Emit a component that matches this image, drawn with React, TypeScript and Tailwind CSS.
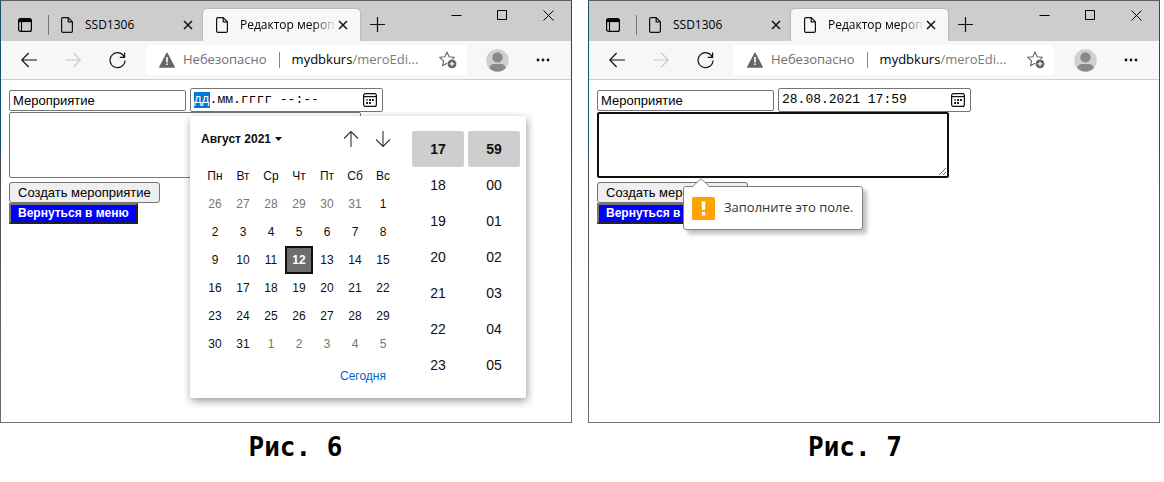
import React, { useEffect, useRef } from "react";

const weekdays = ["Пн", "Вт", "Ср", "Чт", "Пт", "Сб", "Вс"];
const weeks = [
  [26, 27, 28, 29, 30, 31, 1],
  [2, 3, 4, 5, 6, 7, 8],
  [9, 10, 11, 12, 13, 14, 15],
  [16, 17, 18, 19, 20, 21, 22],
  [23, 24, 25, 26, 27, 28, 29],
  [30, 31, 1, 2, 3, 4, 5],
];
const hours = ["17", "18", "19", "20", "21", "22", "23"];
const minutes = ["59", "00", "01", "02", "03", "04", "05"];

function PageIcon() {
  return (
    <svg className="h-4 w-3 shrink-0" viewBox="0 0 12 16" fill="none" stroke="#111" strokeWidth="1.2" strokeLinejoin="round">
      <path d="M2 .6h5.3l4.1 4.2v9.2a1.4 1.4 0 0 1-1.4 1.4H2A1.4 1.4 0 0 1 .6 14V2A1.4 1.4 0 0 1 2 .6Z" />
      <path d="M7.2.8v4.1h4.1" />
    </svg>
  );
}

function CrossIcon() {
  return (
    <svg className="h-2.5 w-2.5" viewBox="0 0 10 10" stroke="#111" strokeWidth="1.5">
      <path d="M1 1l8 8M9 1l-8 8" />
    </svg>
  );
}

function TitleBar() {
  return (
    <div className="flex h-10 items-end bg-[#cdcdcd] text-xs text-black">
      <button aria-label="Меню вкладок" className="mb-[9px] ml-[17px]">
        <svg className="block h-3.5 w-3.5" viewBox="0 0 14 14" fill="none" stroke="#000">
          <rect x=".6" y=".6" width="12.8" height="12.8" rx="2" strokeWidth="1.2" />
          <path d="M1 2.6h12" strokeWidth="3" />
          <path d="M3.5 4v9" strokeWidth="1.1" />
        </svg>
      </button>
      <span className="mb-1.5 ml-4 h-5 w-px bg-[#777]" />
      <div className="mb-px ml-3 flex h-[30px] w-[132px] items-center">
        <PageIcon />
        <span className="ml-3 flex-1">SSD1306</span>
        <button aria-label="Закрыть SSD1306">
          <CrossIcon />
        </button>
      </div>
      <div className="ml-[10px] flex h-8 w-[157px] items-center rounded-t bg-[#f7f7f7] pl-[13px] pr-3 shadow-[0_0_2px_#888] [clip-path:inset(-3px_-3px_0_-3px)]">
        <PageIcon />
        <span className="ml-3 flex-1 whitespace-nowrap [mask-image:linear-gradient(to_right,#000_75%,transparent_98%)]">
          Редактор мероп
        </span>
        <button aria-label="Закрыть вкладку">
          <CrossIcon />
        </button>
      </div>
      <button aria-label="Новая вкладка" className="mb-[9px] ml-2.5">
        <svg className="block h-[15px] w-[15px]" viewBox="0 0 15 15" stroke="#111" strokeWidth="1.2">
          <path d="M7.5 0v15M0 7.5h15" />
        </svg>
      </button>
      <div className="ml-auto mb-5 mr-[17px] flex items-center gap-[35px]">
        <button aria-label="Свернуть">
          <svg className="block h-[11px] w-[11px]" viewBox="0 0 11 11" stroke="#000">
            <path d="M.5 5.5h10" />
          </svg>
        </button>
        <button aria-label="Развернуть">
          <svg className="block h-[11px] w-[11px]" viewBox="0 0 11 11" fill="none" stroke="#000">
            <path d="M.5.5h9v9h-9z" />
          </svg>
        </button>
        <button aria-label="Закрыть окно">
          <svg className="block h-[11px] w-[11px]" viewBox="0 0 11 11" stroke="#000">
            <path d="M.5.5l10 10M10.5.5l-10 10" />
          </svg>
        </button>
      </div>
    </div>
  );
}

function ToolBar() {
  return (
    <div className="flex h-[39px] items-center border-b border-[#cfcfcf] bg-[#f7f7f7] pl-5 pr-[21px] text-[13px]">
      <button aria-label="Назад">
        <svg className="block h-4 w-4" viewBox="0 0 16 16" fill="none" stroke="#111" strokeWidth="1.2">
          <path d="M16 8H.8M7.6 1 .8 8l6.8 7" />
        </svg>
      </button>
      <button aria-label="Вперёд" disabled className="ml-7">
        <svg className="block h-4 w-4" viewBox="0 0 16 16" fill="none" stroke="#c8c8c8" strokeWidth="1.2">
          <path d="M0 8h15.2M8.4 1l6.8 7-6.8 7" />
        </svg>
      </button>
      <button aria-label="Обновить" className="ml-7">
        <svg className="block h-[17px] w-[17px]" viewBox="0 0 17 17" fill="none" stroke="#111" strokeWidth="1.2">
          <path d="M15.400 5.200A7.500 7.500 0 1 0 16 8.500M15.600.5v4.800h-4.800" />
        </svg>
      </button>
      <div className="ml-[19px] flex h-[30px] min-w-0 flex-1 items-center rounded bg-white pl-3.5 pr-2.5">
        <svg className="h-4 w-4 shrink-0" viewBox="0 0 16 16">
          <path d="M8 1.2 15.2 15H.8Z" fill="#666" stroke="#666" strokeWidth="1.4" strokeLinejoin="round" />
          <path d="M7.2 5h1.6v5.4H7.2zM7.2 11.5h1.6v1.6H7.2z" fill="#fff" />
        </svg>
        <span className="ml-2 text-[#6f6f6f]">Небезопасно</span>
        <span className="ml-3 h-4 w-px bg-[#888]" />
        <span className="ml-3 flex-1 whitespace-nowrap text-[#7a7a7a]">
          <span className="text-black">mydbkurs</span>/meroEdi...
        </span>
        <button aria-label="Добавить в избранное">
          <svg className="block h-[18px] w-[18px]" viewBox="0 0 18 18" fill="none">
            <path d="M8 1l2.1 4.8 5.2.5-3.9 3.5 1.1 5L8 12.2l-4.5 2.6 1.1-5L.7 6.3l5.2-.5Z" stroke="#666" strokeWidth="1.1" strokeLinejoin="round" />
            <circle cx="13" cy="12.8" r="5" fill="#fff" />
            <circle cx="13" cy="12.8" r="4.4" fill="#5f5f5f" />
            <path d="M13 10.4v4.8M10.6 12.8h4.8" stroke="#fff" strokeWidth="1.2" />
          </svg>
        </button>
      </div>
      <button aria-label="Профиль" className="ml-[19px]">
        <svg className="block h-[23px] w-[23px]" viewBox="0 0 23 23">
          <circle cx="11.5" cy="11.5" r="11.3" fill="#d2d0ce" />
          <circle cx="11.5" cy="8.4" r="5.2" fill="#8d8884" />
          <path d="M3.4 19.2c0-2.4 2-4.2 4.4-4.2h7.4c2.4 0 4.4 1.8 4.4 4.2a11.300 11.300 0 0 1-16.200 0Z" fill="#8d8884" />
        </svg>
      </button>
      <button aria-label="Настройки" className="ml-[27px]">
        <svg className="block h-1 w-3.5" viewBox="0 0 14 4" fill="#111">
          <circle cx="2" cy="2" r="1.4" />
          <circle cx="7" cy="2" r="1.4" />
          <circle cx="12" cy="2" r="1.4" />
        </svg>
      </button>
    </div>
  );
}

function DateField({ value, editing }: { value: string; editing?: boolean }) {
  const field = useRef<HTMLInputElement>(null);
  useEffect(() => {
    if (editing && field.current) {
      field.current.focus();
      field.current.setSelectionRange(0, 2);
    }
  }, [editing]);
  return (
    <div className="flex h-6 w-[193px] items-center rounded-xs border border-[#767676] bg-white pl-[3px] pr-[5px]">
      <input
        ref={field}
        type="text"
        aria-label="Дата и время"
        defaultValue={value}
        className="h-4 w-0 flex-1 font-['Liberation_Mono','DejaVu_Sans_Mono',monospace] text-[13px] leading-4 caret-transparent outline-none selection:bg-[#0078d7] selection:text-white"
      />
      <button aria-label="Открыть календарь">
        <svg className="block h-3.5 w-3.5" viewBox="0 0 14 14" fill="none" stroke="#111" strokeWidth="1.2">
          <rect x=".6" y=".6" width="12.8" height="12.8" rx="2" />
          <path d="M.6 3.6h12.8" />
          <path d="M6.100 7h1.800M9 7h1.800M3.200 10h1.800M6.100 10h1.800" strokeWidth="1.800" />
          <path d="M3.200 7h1.800" strokeWidth="1.800" stroke="#777" />
        </svg>
      </button>
    </div>
  );
}

function TimeColumn({ values, label }: { values: string[]; label: string }) {
  return (
    <div aria-label={label} className="flex w-[52px] flex-col">
      {values.map((v, i) => (
        <button
          key={v}
          className={i === 0 ? "h-9 rounded-xs bg-[#cecece] font-bold" : "h-9"}
        >
          {v}
        </button>
      ))}
    </div>
  );
}

function Picker() {
  return (
    <div className="absolute left-[189px] top-9 flex h-[282px] w-[336px] rounded-xs bg-white font-['Liberation_Sans',Arial,sans-serif] text-[#101010] shadow-[1px_3px_9px_rgba(0,0,0,0.4)]">
      <div className="flex w-[222px] flex-col px-[11px] pt-[11px] text-xs">
        <div className="flex h-6 items-center">
          <button className="flex items-center gap-1 font-bold">
            Август 2021
            <svg className="h-1 w-[7px]" viewBox="0 0 7 4">
              <path d="M0 0h7L3.5 4Z" fill="#101010" />
            </svg>
          </button>
          <button aria-label="Предыдущий месяц" className="ml-auto">
            <svg className="block h-4 w-4" viewBox="0 0 16 16" fill="none" stroke="#333" strokeWidth="1.1">
              <path d="M8 16V.8M1 7.5l7-7 7 7" />
            </svg>
          </button>
          <button aria-label="Следующий месяц" className="ml-4 mr-2.5">
            <svg className="block h-4 w-4" viewBox="0 0 16 16" fill="none" stroke="#333" strokeWidth="1.1">
              <path d="M8 0v15.2M1 8.5l7 7 7-7" />
            </svg>
          </button>
        </div>
        <table className="mt-[10px] w-[196px] table-fixed border-collapse text-center">
          <thead>
            <tr className="h-[29px]">
              {weekdays.map((d) => (
                <th key={d} className="p-0 font-normal">{d}</th>
              ))}
            </tr>
          </thead>
          <tbody>
            {weeks.map((week, r) => (
              <tr key={r}>
                {week.map((d, c) => {
                  const outside = (r === 0 && d > 20) || (r === 5 && d < 20);
                  const selected = r === 2 && d === 12;
                  return (
                    <td key={c} className="h-7 p-0">
                      <button
                        className={
                          selected
                            ? "block h-7 w-full border-2 border-[#101010] bg-[#6e6e6e] font-bold text-white"
                            : outside
                              ? "block h-7 w-full text-[#767676]"
                              : "block h-7 w-full"
                        }
                      >
                        {d}
                      </button>
                    </td>
                  );
                })}
              </tr>
            ))}
          </tbody>
        </table>
        <button className="mr-[15px] mt-[10px] self-end text-[#0067cb]">Сегодня</button>
      </div>
      <div className="flex gap-1 pt-[15px] text-sm">
        <TimeColumn values={hours} label="Часы" />
        <TimeColumn values={minutes} label="Минуты" />
      </div>
    </div>
  );
}

function Hint() {
  return (
    <div role="alert" className="absolute left-[94px] top-[106px] flex h-11 w-[180px] items-center rounded-[3px] border border-[#808080] bg-white pl-2 font-['Open_Sans','Noto_Sans',sans-serif] text-[13px] text-[#333] shadow-[4px_4px_4px_rgba(0,0,0,0.25)]">
      <svg className="absolute -top-[9px] left-[8px] h-[10px] w-[18px]" viewBox="0 0 18 10">
        <path d="M0 10V9L9 .7 18 9v1Z" fill="#fff" />
        <path d="M0 9 9 .7 18 9" fill="none" stroke="#808080" />
      </svg>
      <svg className="h-[23px] w-[23px] shrink-0" viewBox="0 0 23 23">
        <rect width="23" height="23" rx="1.5" fill="#ffa300" />
        <path d="M9.5 4.500h4l-.5 8.500h-3zM9.800 15h3.400v3.400H9.800z" fill="#fff" />
      </svg>
      <span className="ml-[9px] whitespace-nowrap">Заполните это поле.</span>
    </div>
  );
}

function BrowserWindow({ date, invalid, caption }: { date: string; invalid?: boolean; caption: string }) {
  return (
    <figure className="min-w-0">
      <div className="bg-[linear-gradient(#5f5f5f_1px,#15506f_1px,#15506f_155px,#4a4a4c_156px,#6b6e6c)] p-px font-['Open_Sans','Noto_Sans',sans-serif]">
        <TitleBar />
        <ToolBar />
        <div className="relative min-h-[342px] bg-white px-2 pt-2 font-['Liberation_Sans',Arial,sans-serif] text-[13px] text-black">
          <form onSubmit={(e) => e.preventDefault()}>
            <div className="flex items-center gap-1">
              <input
                type="text"
                aria-label="Название"
                defaultValue="Мероприятие"
                className="h-[21px] w-[177px] rounded-xs border border-[#767676] bg-white px-[3px] outline-none"
              />
              <DateField value={date} editing={!invalid} />
            </div>
            <textarea
              aria-label="Описание"
              className={
                invalid
                  ? "block h-[66px] w-[352px] rounded-xs border-2 border-[#101010] bg-white outline-none"
                  : "block h-[66px] w-[352px] rounded-xs border border-[#767676] bg-white outline-none"
              }
            />
            <button className="mt-1 block h-[21px] rounded-[3px] border border-[#767676] bg-[#efefef] px-2 leading-[19px]">
              Создать мероприятие
            </button>
            <button type="button" className="block h-[21px] border-2 border-b-[#222] border-l-[#767676] border-r-[#222] border-t-[#767676] bg-[#0000ff] px-[7px] text-xs font-bold leading-[17px] text-white">
              Вернуться в меню
            </button>
          </form>
          {invalid ? <Hint /> : <Picker />}
        </div>
      </div>
      <figcaption
        className={
          invalid
            ? "pr-[38px] pt-1 text-center font-['DejaVu_Sans_Mono',monospace] text-[26px] font-bold leading-10 text-black"
            : "pl-[19px] pt-1 text-center font-['DejaVu_Sans_Mono',monospace] text-[26px] font-bold leading-10 text-black"
        }
      >
        {caption}
      </figcaption>
    </figure>
  );
}

export default function App() {
  return (
    <main className="grid grid-cols-2 gap-4 bg-white pr-1">
      <BrowserWindow date="дд.мм.гггг --:--" caption="Рис. 6" />
      <BrowserWindow date="28.08.2021 17:59" caption="Рис. 7" invalid />
    </main>
  );
}
